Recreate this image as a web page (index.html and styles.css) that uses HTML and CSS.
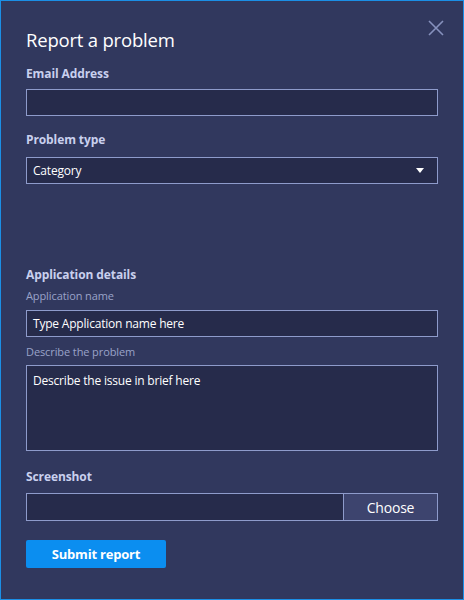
FILE: index.html
```html
<!DOCTYPE html>
<html>
<head>
<meta charset="utf-8">
<link rel="stylesheet" href="styles.css">
</head>
<body>
<div class="dialog">
  <button class="close" aria-label="Close">
    <svg width="16" height="16" viewBox="0 0 16 16"><path d="M1 1 L15 15 M15 1 L1 15" stroke="#8691bd" stroke-width="1.6" fill="none"/></svg>
  </button>
  <h1 class="title">Report a problem</h1>

  <div class="label">Email Address</div>
  <div class="field"></div>

  <div class="label label-2">Problem type</div>
  <div class="field select"><span>Category</span>
    <svg class="arrow" width="8" height="5" viewBox="0 0 8 5"><path d="M0 0 H8 L4 5 Z" fill="#ffffff"/></svg>
  </div>

  <div class="label section">Application details</div>
  <div class="sublabel">Application name</div>
  <div class="field"><span>Type Application name here</span></div>
  <div class="sublabel sub-2">Describe the problem</div>
  <div class="field area"><span>Describe the issue in brief here</span></div>

  <div class="label shot">Screenshot</div>
  <div class="file">
    <div class="file-input"></div>
    <div class="choose">Choose</div>
  </div>

  <button class="submit">Submit report</button>
</div>
</body>
</html>
```

FILE: styles.css
```css
* { box-sizing: border-box; }
html, body { margin: 0; padding: 0; }
body {
  width: 464px;
  height: 600px;
  font-family: "Open Sans", "Noto Sans", sans-serif;
  background: #31385e;
}
.dialog {
  position: relative;
  width: 464px;
  height: 600px;
  border: 1px solid #1b8fe6;
  background: #31385e;
  padding: 0 25px;
  display: flex;
  flex-direction: column;
}
.close {
  position: absolute;
  top: 19px;
  right: 19px;
  width: 16px;
  height: 16px;
  padding: 0;
  border: 0;
  background: none;
  display: block;
}
.close svg { display: block; }
.title {
  margin: 27px 0 0 0;
  font-size: 18.5px;
  line-height: 24px;
  font-weight: 400;
  color: #ffffff;
  letter-spacing: -0.2px;
}
.label {
  font-size: 12px;
  font-weight: 700;
  color: #c9d0ee;
  line-height: 16px;
  margin-top: 14px;
  letter-spacing: -0.1px;
}
.label-2 { margin-top: 16px; }
.label-2 + .field { margin-top: 9px; }
.section { margin-top: 83px; }
.shot { margin-top: 18px; }
.sublabel {
  font-size: 11px;
  color: #9aa3c9;
  line-height: 14px;
  margin-top: 6px;
  letter-spacing: -0.1px;
}
.sub-2 { margin-top: 8px; }
.field {
  margin-top: 7px;
  height: 27px;
  border: 1px solid #8e9bcb;
  background: #262b4b;
  color: #ffffff;
  font-size: 12px;
  display: flex;
  align-items: center;
  padding: 0 6px;
  letter-spacing: -0.2px;
}
.select { justify-content: space-between; }
.select .arrow { margin-right: 7px; }
.field.area {
  margin-top: 6px;
  height: 86px;
  align-items: flex-start;
  padding-top: 6px;
}
.file {
  margin-top: 8px;
  display: flex;
  height: 28px;
  border: 1px solid #8e9bcb;
}
.file-input {
  flex: 1;
  background: #262b4b;
}
.choose {
  width: 94px;
  background: #3d446e;
  border-left: 1px solid #8e9bcb;
  color: #ffffff;
  font-size: 14px;
  display: flex;
  align-items: center;
  justify-content: center;
  letter-spacing: -0.2px;
}
.submit {
  margin-top: 19px;
  width: 140px;
  height: 28px;
  border: 0;
  border-radius: 2px;
  background: #0b8ef0;
  color: #ffffff;
  font-family: "Open Sans", "Noto Sans", sans-serif;
  font-weight: 700;
  font-size: 13px;
  letter-spacing: -0.2px;
  padding: 0;
}
```
